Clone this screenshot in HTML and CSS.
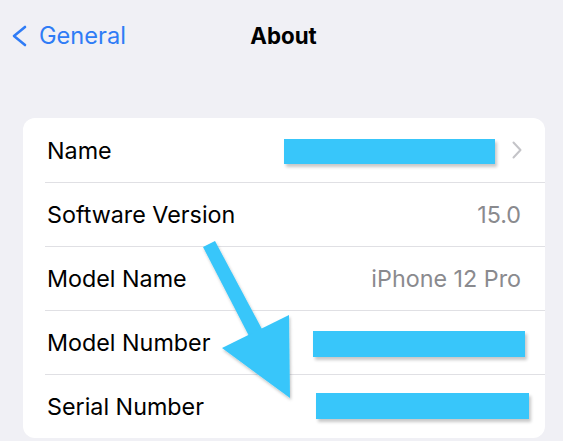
FILE: index.html
```html
<!DOCTYPE html>
<html>
<head>
<meta charset="utf-8">
<link rel="stylesheet" href="styles.css">
</head>
<body>
<div class="screen">
  <header class="navbar">
    <a class="back">
      <svg class="back-chev" width="16" height="22" viewBox="0 0 16 22"><path d="M14 2 L3 11 L14 20" fill="none" stroke="#2f7cf6" stroke-width="2.6" stroke-linecap="round" stroke-linejoin="round"/></svg>
      <span>General</span>
    </a>
    <h1 class="title">About</h1>
  </header>

  <section class="card">
    <div class="row">
      <span class="label">Name</span>
      <span class="value-group">
        <span class="redact redact-name"></span>
        <svg class="chev" width="10" height="18" viewBox="0 0 10 18"><path d="M1.5 1.5 L8.5 9 L1.5 16.5" fill="none" stroke="#c4c4c8" stroke-width="2" stroke-linecap="round" stroke-linejoin="round"/></svg>
      </span>
    </div>
    <div class="row">
      <span class="label">Software Version</span>
      <span class="value">15.0</span>
    </div>
    <div class="row">
      <span class="label">Model Name</span>
      <span class="value">iPhone 12 Pro</span>
    </div>
    <div class="row">
      <span class="label">Model Number</span>
      <span class="redact redact-model"></span>
    </div>
    <div class="row">
      <span class="label">Serial Number</span>
      <span class="redact redact-serial"></span>
    </div>
  </section>

  <svg class="arrow" width="563" height="441" viewBox="0 0 563 441">
    <defs>
      <filter id="sh" x="-20%" y="-20%" width="140%" height="140%">
        <feDropShadow dx="1" dy="2" stdDeviation="1.5" flood-color="#000" flood-opacity="0.25"/>
      </filter>
    </defs>
    <g filter="url(#sh)" fill="#38c6fa">
      <polygon points="203,247 215,241 263,331 250,338"/>
      <polygon points="222,348 289,315 290,398"/>
    </g>
  </svg>
</div>
</body>
</html>
```

FILE: styles.css
```css
* { box-sizing: border-box; }

html, body {
  margin: 0;
  padding: 0;
}

body {
  background: #f0f0f5;
  font-family: Inter, "Noto Sans", "Liberation Sans", sans-serif;
  color: #000;
  -webkit-font-smoothing: antialiased;
}

.screen {
  position: relative;
  width: 563px;
  height: 441px;
  overflow: hidden;
}

.navbar {
  position: relative;
  height: 118px;
  display: flex;
  align-items: flex-start;
  justify-content: center;
  padding-top: 20px;
}

.back {
  position: absolute;
  left: 11px;
  top: 23px;
  display: flex;
  align-items: center;
  gap: 12px;
  color: #2f7cf6;
  font-size: 23.6px;
  line-height: 26px;
}

.back-chev {
  display: block;
}

.title {
  margin: 0;
  margin-left: 4px;
  margin-top: 3px;
  font-size: 22.3px;
  line-height: 26px;
  font-weight: 700;
}

.card {
  margin-left: 23px;
  width: 522px;
  background: #fff;
  border-radius: 12px;
  overflow: hidden;
}

.row {
  position: relative;
  height: 64px;
  display: flex;
  align-items: center;
  justify-content: space-between;
  padding: 0 24px;
  font-size: 23.3px;
}

.row + .row::before {
  content: "";
  position: absolute;
  left: 22px;
  right: 0;
  top: 0;
  height: 1px;
  background: #e0e0e4;
}

.label {
  color: #000;
}

.value {
  color: #8a8a8e;
}

.value-group {
  display: flex;
  align-items: center;
  gap: 17px;
}

.chev {
  display: block;
  margin-right: -1px;
}

.redact {
  display: block;
  background: #38c6fa;
  box-shadow: 2px 3px 3px rgba(0, 0, 0, 0.22);
}

.redact-name {
  width: 211px;
  height: 25px;
  margin-top: 3px;
}

.redact-model {
  width: 212px;
  height: 26px;
  margin-right: -4px;
  margin-top: 4px;
}

.redact-serial {
  width: 213px;
  height: 26px;
  margin-right: -8px;
}

.arrow {
  position: absolute;
  left: 0;
  top: 0;
  pointer-events: none;
}
```
